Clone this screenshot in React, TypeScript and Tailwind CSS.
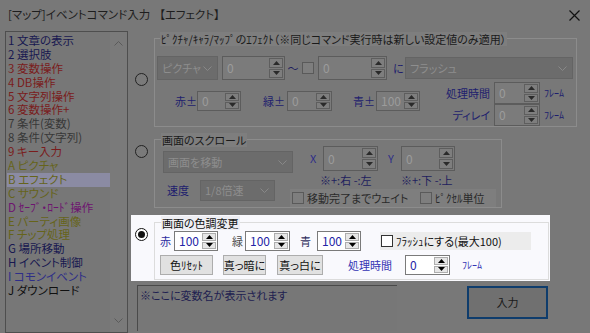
import React from 'react';

const Tri = ({ down }: { down?: boolean }) => (
  <svg width="7" height="4" viewBox="0 0 7 4">
    <path d={down ? 'M0 0h7L3.5 4z' : 'M3.5 0L7 4H0z'} fill="currentColor" />
  </svg>
);

const Chevron = ({ cls }: { cls: string }) => (
  <svg width="9" height="5" viewBox="0 0 9 5" className={cls}>
    <path d="M0.5 0.5l4 4 4-4" fill="none" stroke="currentColor" strokeWidth="1" />
  </svg>
);

// spin box: value + up/down buttons
const Spin = ({ cls, value, bright }: { cls: string; value: string; bright?: boolean }) => (
  <div
    className={`flex shrink-0 border ${
      bright ? 'border-[#7a7a7a] bg-white' : 'border-[#5c5c5c] bg-[#7b7b7b]'
    } ${cls}`}>
    <div
      className={`flex-1 pl-[4px] flex items-center text-[12px] ${
        bright ? 'text-[#2424a6]' : 'text-[#9c9c9c]'
      }`}>
      {value}
    </div>
    <div className="w-[16px] flex flex-col gap-[1px] p-[1px]">
      <div
        className={`flex-1 flex items-center justify-center border ${
          bright ? 'border-[#adadad] bg-[#e6e6e6] text-black' : 'border-[#5e5e5e] bg-[#7e7e7e] text-[#2a2a2a]'
        }`}>
        <Tri />
      </div>
      <div
        className={`flex-1 flex items-center justify-center border ${
          bright ? 'border-[#adadad] bg-[#e6e6e6] text-black' : 'border-[#5e5e5e] bg-[#7e7e7e] text-[#2a2a2a]'
        }`}>
        <Tri down />
      </div>
    </div>
  </div>
);

const DimSelect = ({ cls, text }: { cls: string; text: string }) => (
  <div
    className={`flex shrink-0 items-center justify-between border border-[#646464] bg-[#6c6c6c] pl-[4px] pr-[5px] text-[11px] text-[#8e8e8e] whitespace-nowrap ${cls}`}>
    <span>{text}</span>
    <Chevron cls="text-[#888888]" />
  </div>
);

const Radio = ({ on, cls }: { on?: boolean; cls: string }) => (
  <div
    className={`w-[13px] h-[13px] rounded-full border flex items-center justify-center ${
      on ? 'border-[#111] bg-white' : 'border-[#222] bg-[#7a7a7a]'
    } ${cls}`}>
    {on && <div className="w-[7px] h-[7px] rounded-full bg-[#111]" />}
  </div>
);

const Check = ({ bright }: { bright?: boolean }) => (
  <div
    className={`w-[12px] h-[12px] shrink-0 border ${
      bright ? 'border-[#333] bg-white' : 'border-[#5a5a5a] bg-[#7e7e7e]'
    }`}
  />
);

const items: [string, string][] = [
  ['1 文章の表示', 'text-[#181850]'],
  ['2 選択肢', 'text-[#181850]'],
  ['3 変数操作', 'text-[#7a1c1c]'],
  ['4 DB操作', 'text-[#7a1c1c]'],
  ['5 文字列操作', 'text-[#7a1c1c]'],
  ['6 変数操作+', 'text-[#7a1c1c]'],
  ['7 条件(変数)', 'text-[#383838]'],
  ['8 条件(文字列)', 'text-[#383838]'],
  ['9 キー入力', 'text-[#7a1c1c]'],
  ['A ピクチャ', 'text-[#66641a]'],
  ['B エフェクト', 'text-[#66641a]'],
  ['C サウンド', 'text-[#66641a]'],
  ['D ｾｰﾌﾞ・ﾛｰﾄﾞ操作', 'text-[#6e1470]'],
  ['E パーティ画像', 'text-[#66641a]'],
  ['F チップ処理', 'text-[#66641a]'],
  ['G 場所移動', 'text-[#181850]'],
  ['H イベント制御', 'text-[#181850]'],
  ['I コモンイベント', 'text-[#2e2e88]'],
  ['J ダウンロード', 'text-[#101010]'],
];

const btn =
  'h-[20px] border border-[#adadad] bg-[#e1e1e1] text-[#111] text-[11px] whitespace-nowrap flex items-center justify-center';

const App = () => {
  return (
    <div className="w-[590px] h-[333px] bg-[#787878] overflow-hidden flex flex-col font-['Noto_Sans_CJK_JP',sans-serif] [font-feature-settings:'palt'] text-[11px] leading-none">
      {/* title bar */}
      <div className="h-[28px] mt-[1px] flex items-center pl-[8px] pr-[10px] text-[11.5px] text-[#1e1e1e] whitespace-nowrap">
        <span>[マップ]イベントコマンド入力</span>
        <span className="ml-[9px]">【エフェクト】</span>
        <svg className="ml-auto" width="11" height="11" viewBox="0 0 11 11">
          <path d="M0.5 0.5l10 10M10.5 0.5l-10 10" stroke="#111" strokeWidth="1.2" />
        </svg>
      </div>

      <div className="flex h-[304px]">
        {/* command list */}
        <div className="ml-[5px] mt-[2px] w-[123px] h-[302px] border border-[#4e4e4e] bg-[#777777] flex">
          <div className="ml-[1px] pt-[2px] w-[103px] flex flex-col">
            {items.map(([t, c], i) => (
              <div
                key={t}
                className={`h-[13.9px] leading-[13.9px] pl-[1px] whitespace-nowrap text-[11.5px] ${c} ${
                  i === 10 ? 'bg-[#8b8ba3]' : ''
                }`}>
                {t}
              </div>
            ))}
          </div>
          <div className="ml-auto w-[17px] bg-[#7a7a7a] flex flex-col items-center justify-between py-[9px]">
            <Chevron cls="text-[#5a5a5a] rotate-180" />
            <Chevron cls="text-[#5a5a5a]" />
          </div>
        </div>

        {/* right side */}
        <div className="ml-[3px] flex flex-col">
          {/* picture/chara/map effect */}
          <div className="mt-[9px] flex">
            <div className="w-[23px] pl-[4px]">
              <Radio cls="mt-[35px]" />
            </div>
            <div className="relative w-[423px] h-[89px] border border-[#8c8c8c] flex flex-col pl-[2px] pt-[17px]">
              <span className="absolute -top-[7px] left-[5px] h-[14px] leading-[14px] px-[1px] bg-[#7e7e7e] text-[#1a1a1a] whitespace-nowrap">
                ﾋﾟｸﾁｬ/ｷｬﾗ/ﾏｯﾌﾟのｴﾌｪｸﾄ（※同じコマンド実行時は新しい設定値のみ適用）
              </span>
              <div className="flex items-center h-[24px]">
                <DimSelect cls="w-[61px] h-[24px]" text="ピクチャ" />
                <Spin cls="ml-[4px] w-[63px] h-[24px]" value="0" />
                <span className="w-[16px] text-center text-[#1e1e5e]">～</span>
                <div className="ml-[1px]">
                  <Check />
                </div>
                <Spin cls="ml-[4px] w-[69px] h-[24px]" value="0" />
                <span className="ml-[6px] w-[12px] text-[#1e1e6e]">に</span>
                <DimSelect cls="w-[168px] h-[22px]" text="フラッシュ" />
              </div>
              <div className="flex mt-[2px]">
                <div className="flex items-center mt-[9px] h-[20px] text-[#1e1e6e] whitespace-nowrap">
                  <span className="ml-[18px] w-[22px]">赤±</span>
                  <Spin cls="w-[44px] h-[20px]" value="0" />
                  <span className="ml-[22px] w-[24px]">緑±</span>
                  <Spin cls="w-[45px] h-[20px]" value="0" />
                  <span className="ml-[21px] w-[23px]">青±</span>
                  <Spin cls="w-[44px] h-[20px]" value="100" />
                </div>
                <div className="ml-[20px] flex flex-col text-[#1e1e6e] whitespace-nowrap">
                  <div className="flex items-center h-[22px]">
                    <span className="w-[50px] text-right">処理時間</span>
                    <Spin cls="ml-[4px] w-[46px] h-[22px]" value="0" />
                    <span className="ml-[4px] text-[10px]">ﾌﾚｰﾑ</span>
                  </div>
                  <div className="flex items-center h-[22px]">
                    <span className="w-[50px] text-right">ディレイ</span>
                    <Spin cls="ml-[4px] w-[46px] h-[22px]" value="0" />
                    <span className="ml-[4px] text-[10px]">ﾌﾚｰﾑ</span>
                  </div>
                </div>
              </div>
            </div>
          </div>

          {/* scroll */}
          <div className="mt-[12px] flex">
            <div className="w-[23px] pl-[4px]">
              <Radio cls="mt-[6px]" />
            </div>
            <div className="relative w-[348px] h-[69px] border border-[#8c8c8c] flex pl-[8px]">
              <span className="absolute -top-[7px] left-[6px] h-[14px] leading-[14px] px-[1px] bg-[#7e7e7e] text-[#1a1a1a] whitespace-nowrap">
                画面のスクロール
              </span>
              <div className="w-[127px] flex flex-col">
                <DimSelect cls="mt-[11px] w-[130px] h-[22px]" text="画面を移動" />
                <div className="mt-[7px] flex items-center h-[21px]">
                  <span className="ml-[4px] w-[33px] text-[#1e1e6e]">速度</span>
                  <DimSelect cls="w-[75px] h-[21px]" text="1/8倍速" />
                </div>
              </div>
              <div className="flex flex-col">
                <div className="mt-[6px] h-[25px] flex items-center text-[#2e2e88]">
                  <span className="ml-[20px] w-[10px]">X</span>
                  <Spin cls="ml-[3px] w-[55px] h-[25px]" value="0" />
                  <span className="ml-[10px] w-[10px]">Y</span>
                  <Spin cls="ml-[3px] w-[54px] h-[25px]" value="0" />
                </div>
                <div className="mt-[3px] h-[13px] flex items-center text-[#1e1e5e] whitespace-nowrap">
                  <span className="ml-[30px] w-[81px]">※+:右 -:左</span>
                  <span>※+:下 -:上</span>
                </div>
                <div className="mt-[2px] h-[18px] w-[206px] bg-[#7e7e7e] flex items-center text-[#2a2a2a] whitespace-nowrap">
                  <div className="w-[130px] flex items-center pl-[2px]">
                    <Check />
                    <span className="ml-[3px]">移動完了までウェイト</span>
                  </div>
                  <Check />
                  <span className="ml-[3px]">ﾋﾟｸｾﾙ単位</span>
                </div>
              </div>
            </div>
          </div>

          {/* color tone (highlighted) */}
          <div className="mt-[7px] w-[419px] h-[66px] bg-[#f9f9fd] flex pt-[7px]">
            <div className="w-[23px] pl-[4px]">
              <Radio on cls="mt-[6px]" />
            </div>
            <div className="relative w-[395px] h-[58px] border border-[#dcdcdc] flex flex-col pl-[5px] pt-[8px]">
              <span className="absolute -top-[7px] left-[6px] h-[14px] leading-[14px] px-[1px] bg-[#eeeef3] text-[#111] whitespace-nowrap">
                画面の色調変更
              </span>
              <div className="flex items-center h-[20px]">
                <span className="w-[12px] text-[#2c2ca0]">赤</span>
                <Spin bright cls="ml-[2px] w-[44px] h-[20px]" value="100" />
                <span className="ml-[14px] w-[12px] text-[#4a4a4a]">緑</span>
                <Spin bright cls="ml-[1px] w-[45px] h-[20px]" value="100" />
                <span className="ml-[10px] w-[12px] text-[#2e2e5e]">青</span>
                <Spin bright cls="ml-[5px] w-[44px] h-[20px]" value="100" />
                <div className="ml-[19px] w-[151px] h-[18px] bg-[#ececec] flex items-center pl-[1px] text-[#111] whitespace-nowrap">
                  <Check bright />
                  <span className="ml-[3px]">ﾌﾗｯｼｭにする(最大100)</span>
                </div>
              </div>
              <div className="mt-[4px] flex items-center h-[20px]">
                <button className={`w-[53px] ${btn}`}>色ﾘｾｯﾄ</button>
                <button className={`ml-[10px] w-[43px] ${btn}`}>真っ暗に</button>
                <button className={`ml-[11px] w-[46px] ${btn}`}>真っ白に</button>
                <span className="ml-[25px] w-[57px] text-[#3434b4] whitespace-nowrap">処理時間</span>
                <Spin bright cls="w-[45px] h-[20px]" value="0" />
                <span className="ml-[12px] text-[10px] text-[#3434b4]">ﾌﾚｰﾑ</span>
              </div>
            </div>
          </div>

          {/* bottom */}
          <div className="mt-[4px] flex">
            <div className="ml-[6px] w-[260px] h-[46px] border-t border-l border-[#4a4a4a] bg-[#777777] pl-[2px] pt-[4px] text-[#202050] whitespace-nowrap">
              ※ここに変数名が表示されます
            </div>
            <button className="ml-[70px] mt-[1px] w-[81px] h-[33px] border-2 border-[#0e3c6c] bg-[#707070] text-[#1a1a1a] text-[11px]">
              入力
            </button>
          </div>
        </div>
      </div>
    </div>
  );
};

export default App;
